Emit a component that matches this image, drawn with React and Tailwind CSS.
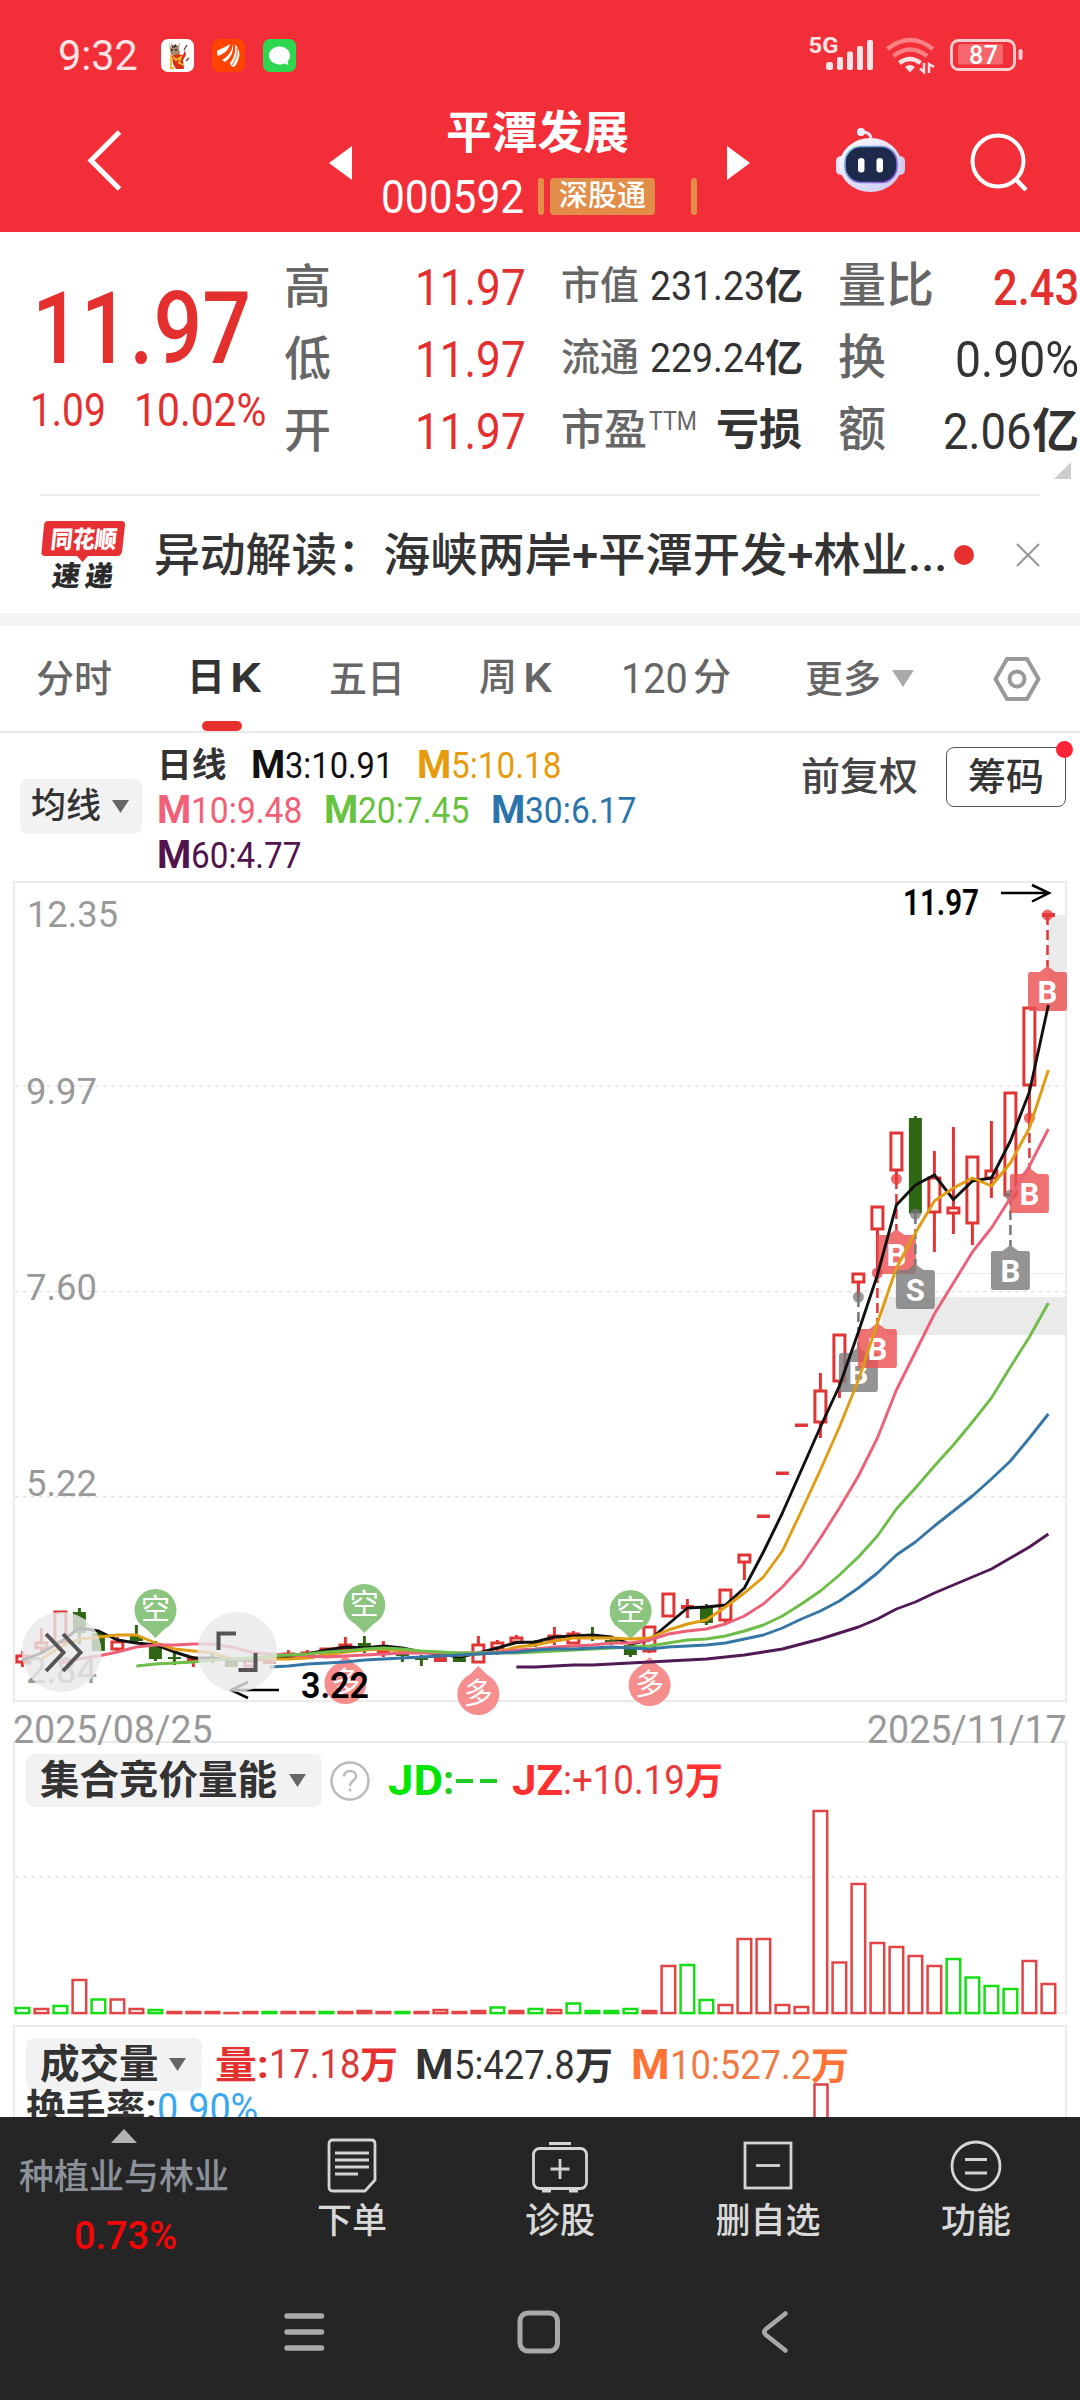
import React, { useLayoutEffect, useRef } from "react";

const RED = "#e03534";
const GREEN = "#2f6613";

// squeezes its text to the width of the box, the way the narrow quote digits look
const Fit = ({ className = "", children }) => {
  const box = useRef(null);
  const inner = useRef(null);

  useLayoutEffect(() => {
    const scale = box.current.clientWidth / inner.current.offsetWidth;
    inner.current.style.transform = `scaleX(${scale})`;
  }, [children]);

  return (
    <span ref={box} className={`block shrink-0 whitespace-nowrap ${className}`}>
      <span ref={inner} className="inline-block origin-left">
        {children}
      </span>
    </span>
  );
};

/* ---------- header ---------- */

const StatusBar = () => (
  <div className="flex h-[110px] items-center pl-[58px] pr-[56px] text-[#fde3e4]">
    <Fit className="w-[80px] text-[43px] leading-none">9:32</Fit>
    <div className="ml-[23px] flex gap-[18px]">
      <svg width="33" height="33" viewBox="0 0 33 33">
        <rect width="33" height="33" rx="7" fill="#fff" />
        <path d="M8 3l2 6 3-3 4 1 2-4-1 6 1 5-4 4-5-2-1-5z" fill="#a98a6c" />
        <path d="M10 4l2 3 3-2 1 3-5 1z" fill="#4a3a2c" />
        <path d="M11 17l6-2 5 1 2-5 1 5-3 5 1 9H15l-3-5z" fill="#d9301c" />
        <path d="M12 18l3 3 5-3-2 6 5 2M10 16v14M9 29h4" stroke="#f3b62a" strokeWidth="1.800" fill="none" />
        <path d="M23 11l3-5M25 22l3-3" stroke="#6b3b2a" strokeWidth="1.300" />
        <path d="M10 11h2M14 11h2" stroke="#222" strokeWidth="1.400" />
      </svg>
      <svg width="33" height="33" viewBox="0 0 33 33">
        <rect width="33" height="33" rx="7" fill="#ff4400" />
        <path d="M5 12C10 9 14 8 18 5C17 10 14 14 6 17C5 16 5 14 5 12z" fill="#fff" />
        <path d="M21 5C20 12 17 17 10 21L13 23C19 19 22 12 21 5z" fill="#fff" />
        <path d="M23 5C27 10 29 15 26 21C25 25 23 28 21 28C19 27 18 25 18 24C22 19 24 13 23 5z" fill="#fff" />
        <path d="M25 9C26 15 24 20 20 26" stroke="#ff4400" strokeWidth="0.900" fill="none" />
      </svg>
      <svg width="33" height="33" viewBox="0 0 33 33">
        <rect width="33" height="33" rx="7" fill="#2fd64f" />
        <path d="M16.500 7.500C22 7.500 27 11 27 16.500C27 19 26 21 24.500 22.500L25.500 26L21.500 24.500C20 25.200 18 25.500 16.500 25.500C11 25.500 6 22 6 16.500C6 11 11 7.500 16.500 7.500z" fill="#fff" />
      </svg>
    </div>
    <div className="ml-auto flex items-center">
      <svg width="215" height="40" viewBox="808 34 215 40">
        <text x="807.500" y="52" fontSize="22" fontWeight="700" textLength="30" lengthAdjust="spacingAndGlyphs" fill="#fde3e4" fontFamily="Roboto, sans-serif">5G</text>
        <g fill="#fde3e4">
          <rect x="825" y="61" width="7" height="8" rx="2.500" />
          <rect x="836" y="56" width="6" height="13" rx="2" />
          <rect x="846" y="50.500" width="6" height="18.500" rx="2" />
          <rect x="856" y="45" width="6" height="24" rx="2" />
          <rect x="866" y="39" width="6" height="30" rx="2" />
        </g>
        <g fill="none" strokeWidth="4.600">
          <path d="M886.500 48Q909 30 932 48" stroke="#f98084" />
          <path d="M892.500 55Q909 42 926 55" stroke="#f98084" />
          <path d="M898.500 62Q909 54 919.500 62" stroke="#fde3e4" />
        </g>
        <path d="M904 66Q909 62 914 66L909 71.500z" fill="#fde3e4" />
        <path d="M919 67.500l4 3.500V62M933 66l-5-3V72" stroke="#fde3e4" strokeWidth="2.400" fill="none" />
        <rect x="950.500" y="39.500" width="63" height="29" rx="7" fill="none" stroke="#fbd0d2" strokeWidth="2.800" />
        <rect x="957" y="43" width="45" height="20.500" rx="2" fill="#f5676c" />
        <rect x="1017.500" y="48" width="4" height="11" rx="2" fill="#fbd0d2" />
        <text x="968" y="63" fontSize="25" fontWeight="500" textLength="29" fill="#fff" fontFamily="Roboto, sans-serif">87</text>
      </svg>
    </div>
  </div>
);

const TitleBar = () => (
  <div className="flex h-[122px] items-start">
    <svg className="ml-[86px] mt-[17px]" width="40" height="66" viewBox="0 0 40 66" fill="none" stroke="#fff" strokeWidth="5">
      <path d="M33.500 5L5 33.500L33.500 62" />
    </svg>
    <svg className="ml-[203px] mt-[36px]" width="23" height="34" viewBox="0 0 23 34" fill="#fff">
      <path d="M23 0V34L0 17z" />
    </svg>
    <div className="ml-[29px] flex w-[317px] flex-col">
      <Fit className="ml-[65px] mt-px w-[183px] text-[45px] font-bold leading-[46px] text-white">平潭发展</Fit>
      <div className="mt-[21px] flex h-[37px] items-center">
        <Fit className="mt-px w-[143px] text-[46px] font-[450] leading-none text-white">000592</Fit>
        <div className="ml-[14px] h-[37px] w-[6px] rounded-sm bg-[#e28e49]" />
        <div className="ml-[6px] flex h-[37px] w-[105px] items-center justify-center rounded-sm bg-[#e28e49] text-[29px] font-medium leading-none text-white">
          深股通
        </div>
        <div className="ml-[36px] h-[37px] w-[6px] rounded-sm bg-[#e28e49]" />
      </div>
    </div>
    <svg className="ml-[29px] mt-[36px]" width="23" height="34" viewBox="0 0 23 34" fill="#fff">
      <path d="M0 0V34L23 17z" />
    </svg>
    <svg className="ml-[85px] mt-[17px]" width="71" height="66" viewBox="835 127 71 66">
      <defs>
        <linearGradient id="shell" x1="0" y1="0" x2="1" y2="1">
          <stop offset="0" stopColor="#ffffff" />
          <stop offset="1" stopColor="#c9c4ee" />
        </linearGradient>
        <linearGradient id="rim" x1="0" y1="0" x2="1" y2="1">
          <stop offset="0" stopColor="#6fc4e0" />
          <stop offset="1" stopColor="#8a4be0" />
        </linearGradient>
      </defs>
      <path d="M871 139C871 134 867 132 862 132" stroke="#e4dff5" strokeWidth="3" fill="none" />
      <circle cx="861" cy="132" r="4" fill="#f3f0fb" />
      <rect x="836" y="156" width="10" height="19" rx="5" fill="#e6e3f8" />
      <rect x="895" y="156" width="10" height="19" rx="5" fill="#cfcaf0" />
      <ellipse cx="870.500" cy="165" rx="31" ry="27" fill="url(#shell)" />
      <rect x="845" y="146.500" width="52" height="36" rx="16" fill="#1e2a4c" stroke="url(#rim)" strokeWidth="1.600" />
      <rect x="858" y="158" width="6.500" height="14.500" rx="3.200" fill="#fff" />
      <rect x="876.500" y="158" width="6.500" height="14.500" rx="3.200" fill="#fff" />
    </svg>
    <svg className="ml-[64px] mt-[22px]" width="60" height="60" viewBox="970 132 60 60" fill="none" stroke="#fff" strokeWidth="4">
      <circle cx="998" cy="161" r="25.500" />
      <path d="M1015.500 179L1026 190" strokeWidth="4.500" />
    </svg>
  </div>
);

/* ---------- quote ---------- */

const BASIC = ["高", "低", "开"];

const Quote = () => (
  <div className="flex h-[262px] pt-[18px] font-[450] leading-none text-[#333]">
    <div className="w-[284px] text-[#e3302f]">
      <Fit className="ml-[32px] mt-[29px] w-[219px] text-[100px] font-medium leading-[100px]">11.97</Fit>
      <div className="mt-[7px] flex pl-[30px] text-[47px]">
        <Fit className="w-[76px]">1.09</Fit>
        <Fit className="ml-[28px] w-[132px]">10.02%</Fit>
      </div>
    </div>
    <div className="w-[277px]">
      {BASIC.map((name) => (
        <div key={name} className="flex h-[72px] items-center">
          <span className="w-[131px] text-[47px] font-medium text-[#666]">{name}</span>
          <Fit className="w-[111px] pt-[4px] text-[50px] text-[#e3302f]">11.97</Fit>
        </div>
      ))}
    </div>
    <div className="w-[277px] text-[40px]">
      <div className="flex h-[72px] items-center">
        <span className="w-[89px] text-[39px] font-medium text-[#666]">市值</span>
        <Fit className="w-[115px] pt-px">231.23</Fit>
        <span className="text-[38px] font-bold">亿</span>
      </div>
      <div className="flex h-[72px] items-center">
        <span className="w-[89px] text-[39px] font-medium text-[#666]">流通</span>
        <Fit className="w-[115px] pt-px">229.24</Fit>
        <span className="text-[38px] font-bold">亿</span>
      </div>
      <div className="flex h-[72px] items-center">
        <span className="text-[43px] font-medium text-[#666]">市盈</span>
        <Fit className="-mt-[18px] ml-[2px] w-[48px] text-[25px] text-[#666]">TTM</Fit>
        <span className="ml-[19px] text-[43px] font-bold">亏损</span>
      </div>
    </div>
    <div className="flex-1 pr-px text-[50px]">
      <div className="flex h-[72px] items-center justify-between">
        <span className="text-[48px] font-medium text-[#666]">量比</span>
        <Fit className="w-[86px] pt-[4px] font-medium text-[#e3302f]">2.43</Fit>
      </div>
      <div className="flex h-[72px] items-center justify-between">
        <span className="text-[48px] font-medium text-[#666]">换</span>
        <Fit className="w-[124px] pt-[4px]">0.90%</Fit>
      </div>
      <div className="flex h-[72px] items-center">
        <span className="text-[48px] font-medium text-[#666]">额</span>
        <Fit className="ml-auto w-[89px] pt-[4px]">2.06</Fit>
        <span className="text-[47px] font-bold">亿</span>
      </div>
      <svg className="-mt-[4px] ml-auto mr-[8px]" width="17" height="17" viewBox="0 0 17 17">
        <path d="M17 0V17H0z" fill="#ccc" />
      </svg>
    </div>
  </div>
);

const News = () => (
  <div className="mx-[40px] flex h-[119px] items-center border-t-2 border-[#eee] text-[46px] font-medium leading-none text-[#333]">
    <svg className="overflow-visible" width="86" height="70" viewBox="40 518 86 70">
      <path d="M48 519H121Q125.500 519 125 523L122 550Q121 554 117 554H88L82.500 560L77 554H45Q41 554 41.500 550L44 523Q44.500 519 48 519z" fill="#e63033" />
      <text x="0" y="0" transform="translate(50 546) skewX(-6)" fontSize="24" fontWeight="900" textLength="66" lengthAdjust="spacingAndGlyphs" fill="#fff" fontFamily="Noto Sans CJK SC, sans-serif">同花顺</text>
      <text x="0" y="0" transform="translate(51 584) skewX(-8)" fontSize="28" fontWeight="900" textLength="61" fill="#2b2b2b" fontFamily="Noto Sans CJK SC, sans-serif">速递</text>
    </svg>
    <Fit className="ml-[28px] w-[229px]">异动解读：</Fit>
    <Fit className="w-[564px]">海峡两岸+平潭开发+林业...</Fit>
    <div className="ml-[7px] h-[20px] w-[20px] rounded-full bg-[#e8302f]" />
    <svg className="ml-auto" width="24" height="24" viewBox="0 0 24 24" stroke="#999" strokeWidth="2.200">
      <path d="M1 1L23 23M23 1L1 23" />
    </svg>
  </div>
);

/* ---------- tabs and legend ---------- */

const Tabs = () => (
  <div className="flex h-[107px] items-center border-b-2 border-[#e8e8e8] text-[38px] font-medium leading-none text-[#666]">
    <span className="ml-[36px] w-[151px]">分时</span>
    <div className="relative flex w-[142px] gap-[5px] font-bold text-[#333]">
      <span>日</span>
      <Fit className="w-[31px] text-[41px] font-semibold">K</Fit>
      <div className="absolute left-[15px] top-[63px] h-[10px] w-[40px] rounded-full bg-[#e8302f]" />
    </div>
    <span className="w-[150px]">五日</span>
    <div className="flex w-[142px] gap-[6px]">
      <span>周</span>
      <Fit className="w-[29px] text-[41px]">K</Fit>
    </div>
    <div className="flex w-[184px] gap-[5px]">
      <Fit className="w-[67px] text-[42px] font-[450]">120</Fit>
      <span>分</span>
    </div>
    <span>更多</span>
    <svg className="ml-[11px]" width="22" height="17" viewBox="0 0 22 17">
      <path d="M0 0H22L11 17z" fill="#aaa" />
    </svg>
    <svg className="ml-auto mr-[39px]" width="48" height="46" viewBox="0 0 48 46" fill="none" stroke="#999" strokeWidth="4">
      <path d="M14 3H34L45.500 23L34 43H14L2.500 23z" strokeLinejoin="round" />
      <circle cx="24" cy="23" r="7.500" />
    </svg>
  </div>
);

const Caret = ({ className }) => (
  <svg className={className} width="17" height="13" viewBox="0 0 17 13">
    <path d="M0 0H17L8.500 13z" fill="#666" />
  </svg>
);

const Ma = ({ value, className, width }) => (
  <div className={`flex items-baseline ${className}`}>
    <Fit className="w-[34px] text-[38px] font-bold">M</Fit>
    <Fit className={width}>{value}</Fit>
  </div>
);

const Legend = () => (
  <div className="flex h-[147px] items-start leading-none">
    <div className="ml-[20px] mt-[46px] flex h-[55px] w-[122px] items-center rounded-lg bg-[#f2f2f2] pl-[11px] text-[35px] font-medium text-[#333]">
      均线
      <Caret className="ml-[11px]" />
    </div>
    <div className="ml-[15px] mt-[9px] w-[560px] text-[36px] font-[450]">
      <div className="flex h-[45px] items-center">
        <Fit className="w-[94px] text-[34px] font-bold text-[#333]">
          <span className="pr-[24px]">日线</span>
        </Fit>
        <Ma value="3:10.91" width="w-[108px]" className="text-[#111]" />
        <Ma value="5:10.18" width="w-[110px]" className="ml-[24px] text-[#e69b0c]" />
      </div>
      <div className="flex h-[45px] items-center gap-[22px]">
        <Ma value="10:9.48" width="w-[111px]" className="text-[#f25f78]" />
        <Ma value="20:7.45" width="w-[111px]" className="text-[#67c23f]" />
        <Ma value="30:6.17" width="w-[111px]" className="text-[#2b74ab]" />
      </div>
      <div className="flex h-[45px] items-center">
        <Ma value="60:4.77" width="w-[110px]" className="text-[#52134f]" />
      </div>
    </div>
    <span className="ml-auto mt-[25px] text-[39px] font-medium text-[#444]">前复权</span>
    <div className="relative ml-[28px] mr-[14px] mt-[14px] flex h-[60px] w-[120px] items-center justify-center rounded-lg border border-[#555] text-[38px] font-medium text-[#333]">
      筹码
      <div className="absolute -right-[8px] -top-[7px] h-[17px] w-[17px] rounded-full bg-[#ff2338]" />
    </div>
  </div>
);

/* ---------- candle chart ---------- */

const xAt = (i) => 22.4 + i * 19;

// [up, body top, body bottom, wick top, wick bottom] in chart pixels
const CANDLES = [
  [1, 1656, 1662, 1651, 1667],
  [1, 1643, 1648, 1628, 1653],
  [1, 1612, 1642, 1612, 1642],
  [0, 1612, 1633, 1608, 1644],
  [0, 1633, 1651, 1630, 1651],
  [1, 1642, 1649, 1637, 1652],
  [0, 1636, 1641, 1625, 1643],
  [0, 1643, 1659, 1641, 1661],
  [0, 1657, 1659, 1652, 1665],
  [1, 1658, 1660, 1656, 1667],
  [0, 1657, 1659, 1652, 1663],
  [0, 1661, 1667, 1661, 1667],
  [1, 1661, 1666, 1661, 1666],
  [1, 1660, 1663, 1658, 1664],
  [1, 1654, 1658, 1650, 1658],
  [1, 1653, 1657, 1650, 1658],
  [1, 1649, 1655, 1649, 1655],
  [1, 1645, 1649, 1637, 1650],
  [0, 1643, 1648, 1636, 1653],
  [1, 1650, 1652, 1641, 1657],
  [0, 1653, 1656, 1650, 1662],
  [0, 1657, 1660, 1655, 1666],
  [1, 1658, 1661, 1656, 1662],
  [0, 1657, 1662, 1656, 1662],
  [1, 1645, 1662, 1636, 1662],
  [1, 1643, 1648, 1640, 1655],
  [1, 1638, 1642, 1635, 1643],
  [0, 1642, 1645, 1640, 1647],
  [1, 1636, 1640, 1627, 1645],
  [1, 1634, 1643, 1631, 1643],
  [0, 1634, 1636, 1627, 1641],
  [0, 1640, 1643, 1638, 1645],
  [0, 1645, 1655, 1643, 1657],
  [1, 1627, 1651, 1627, 1653],
  [1, 1594, 1616, 1594, 1616],
  [1, 1606, 1608, 1599, 1618],
  [0, 1607, 1623, 1604, 1625],
  [1, 1590, 1620, 1590, 1625],
  [1, 1555, 1562, 1555, 1580],
  [1, 1515.5, 1517, 1516, 1517],
  [1, 1472.5, 1474, 1473, 1474],
  [1, 1424.5, 1426, 1425, 1426],
  [1, 1391, 1422, 1373, 1438],
  [1, 1335, 1381, 1335, 1398],
  [1, 1274, 1282, 1274, 1297],
  [1, 1207, 1229, 1207, 1273],
  [1, 1133, 1170, 1133, 1179],
  [0, 1118, 1213.5, 1116, 1213],
  [1, 1178, 1212, 1151, 1252],
  [1, 1208, 1213, 1127, 1234],
  [1, 1157, 1223, 1157, 1245],
  [1, 1171, 1178, 1121, 1198],
  [1, 1093, 1195, 1093, 1195],
  [1, 1008, 1085, 1008, 1118],
  [1, 914, 916, 914, 916],
];

// moving averages: index of the first candle, colour, one y for each candle
const AVERAGES = [
  {
    from: 0,
    color: "#111",
    ys: [1660, 1653, 1642, 1628, 1631, 1640, 1643, 1645, 1652, 1658, 1658, 1660, 1660, 1659, 1657, 1654, 1650, 1647, 1648, 1646, 1648, 1652, 1654, 1657, 1653, 1648, 1642.5, 1642, 1637, 1636, 1635, 1637, 1644, 1640, 1624, 1608, 1607, 1605, 1588, 1552, 1513, 1470, 1427, 1386, 1332, 1275, 1205, 1185, 1175, 1199.5, 1181, 1178, 1141, 1092, 1005],
  },
  {
    from: 1,
    color: "#e09c12",
    ys: [1659, 1647, 1639, 1637, 1635, 1635, 1643, 1649, 1651, 1653, 1659, 1659, 1659, 1659, 1658, 1655, 1652, 1650, 1649, 1651, 1652, 1653, 1655, 1654, 1652, 1647, 1645, 1641, 1638, 1638, 1638, 1639, 1638, 1630, 1624, 1620, 1607, 1593, 1577, 1551, 1511, 1470, 1427, 1380, 1323, 1268, 1233, 1201, 1188, 1178, 1186, 1163, 1128, 1070],
  },
  {
    from: 2,
    color: "#ec6078",
    ys: [1663, 1659, 1656, 1652, 1647, 1645, 1645, 1644, 1644, 1647, 1652, 1654, 1655, 1656, 1657, 1656, 1655, 1654, 1653, 1653, 1653, 1653, 1653, 1652, 1650, 1649, 1647, 1646, 1645, 1643, 1643, 1640, 1634, 1631, 1629, 1624, 1616, 1604, 1587, 1566, 1538, 1508, 1476, 1438, 1390, 1352, 1314, 1283, 1252, 1228, 1198, 1166, 1129],
  },
  {
    from: 6,
    color: "#6dbd48",
    ys: [1666, 1664, 1663, 1662, 1660, 1659, 1658, 1656, 1655, 1654, 1652, 1651, 1649, 1648, 1649, 1651, 1652, 1653, 1653, 1653, 1653, 1652, 1651, 1650, 1649, 1648, 1647, 1646, 1643, 1640, 1639, 1636, 1631, 1625, 1616, 1604, 1591, 1575, 1557, 1536, 1509, 1488, 1466, 1445, 1422, 1398, 1367, 1337, 1303],
  },
  {
    from: 13,
    color: "#3676a6",
    ys: [1667, 1666, 1664, 1663, 1662, 1660, 1659, 1658, 1657, 1656, 1655, 1654, 1653, 1652, 1650, 1649, 1649, 1648, 1647, 1648, 1649, 1647, 1646, 1645, 1643, 1639, 1635, 1628, 1619, 1611, 1601, 1588, 1573, 1555, 1542, 1526, 1511, 1496, 1479, 1461, 1438, 1414],
  },
  {
    from: 26,
    color: "#511a55",
    ys: [1667, 1667, 1666, 1665, 1665, 1664, 1663, 1662, 1661, 1660, 1659, 1657, 1655, 1652, 1649, 1644, 1639, 1633, 1627, 1619, 1609, 1602, 1593, 1585, 1577, 1569, 1558, 1547, 1534],
  },
];

// [centre x, top y, letter, red, dot y]
const TRADES = [
  [858.4, 1353, "B", false, 1297],
  [877.4, 1329, "B", true, 1273],
  [896.4, 1235, "B", true, 1179],
  [915.4, 1270, "S", false, 1214],
  [1010.4, 1251, "B", false, 1195],
  [1029.4, 1174, "B", true, 1118],
  [1047.5, 972, "B", true, 915],
];

const Candle = ({ i, data }) => {
  const [up, top, bottom, high, low] = data;
  const x = xAt(i);
  const color = up ? RED : GREEN;
  return (
    <g stroke={color} strokeWidth="3">
      {high < top && <path d={`M${x} ${high}V${top}`} />}
      {low > bottom && <path d={`M${x} ${bottom}V${low}`} />}
      {up ? (
        bottom - top < 4 ? (
          <rect x={x - 6.5} y={top - 1} width="13" height={bottom - top + 2} fill={color} stroke="none" />
        ) : (
          <rect x={x - 5.5} y={top} width="11" height={bottom - top} fill="#fff" />
        )
      ) : (
        <rect x={x - 6.5} y={top} width="13" height={bottom - top} fill={color} stroke="none" />
      )}
    </g>
  );
};

const Trade = ({ x, y, letter, red, dot }) => (
  <g>
    <path d={`M${x} ${dot}V${y - 5}`} stroke={red ? RED : "#777"} strokeWidth="2.500" strokeDasharray="10 5" />
    <circle cx={x} cy={dot} r="5.500" fill={red ? "#e8383a" : "#777"} opacity="0.75" />
    <path
      d={`M${x - 17} ${y}H${x - 8}L${x} ${y - 6}L${x + 8} ${y}H${x + 17}Q${x + 19.5} ${y} ${x + 19.5} ${y + 3}V${y + 36}Q${x + 19.5} ${y + 39} ${x + 17} ${y + 39}H${x - 17}Q${x - 19.5} ${y + 39} ${x - 19.5} ${y + 36}V${y + 3}Q${x - 19.5} ${y} ${x - 17} ${y}z`}
      fill={red ? "#ec5253" : "#7c7c7c"}
      opacity="0.82"
    />
    <text x={x} y={y + 31} textAnchor="middle" fontSize="31" fontWeight="700" fill="#fff">
      {letter}
    </text>
  </g>
);

const Pin = ({ x, y, down }) => (
  <g>
    <circle cx={x} cy={y} r="21" fill={down ? "#8bc57f" : "#f78e8e"} />
    <path
      d={down ? `M${x - 12} ${y + 16}L${x} ${y + 28}L${x + 12} ${y + 16}z` : `M${x - 12} ${y - 16}L${x} ${y - 28}L${x + 12} ${y - 16}z`}
      fill={down ? "#8bc57f" : "#f78e8e"}
    />
    <text x={x} y={y + 10} textAnchor="middle" fontSize="29" fill="#fff" fontFamily="Noto Sans CJK SC, sans-serif">
      {down ? "空" : "多"}
    </text>
  </g>
);

const CandleChart = () => (
  <svg className="relative block overflow-visible" width="1080" height="822" viewBox="0 880 1080 822" fontFamily="Roboto, sans-serif">
    <rect x="14" y="882" width="1052" height="819" fill="none" stroke="#ebebeb" strokeWidth="2" />
    <path d="M15 1086H1066M15 1291.500H1066M15 1496.500H1066" stroke="#e2e2e2" strokeWidth="1.300" strokeDasharray="4 4" />
    <rect x="1048" y="915" width="19" height="95" fill="#eaeaea" />
    <rect x="882" y="1297" width="185" height="38" fill="#eaeaea" />
    <path d="M935 1273.500H1067" stroke="#ebebeb" />

    <g fontSize="37" fontWeight="450" fill="#999">
      <text x="27" y="927" textLength="91" lengthAdjust="spacingAndGlyphs">12.35</text>
      <text x="26" y="1104" textLength="71" lengthAdjust="spacingAndGlyphs">9.97</text>
      <text x="26" y="1300" textLength="71" lengthAdjust="spacingAndGlyphs">7.60</text>
      <text x="26" y="1496" textLength="71" lengthAdjust="spacingAndGlyphs">5.22</text>
      <text x="26" y="1683" textLength="71" lengthAdjust="spacingAndGlyphs">2.84</text>
    </g>

    {CANDLES.map((c, i) => (
      <Candle key={i} i={i} data={c} />
    ))}

    <Pin x={155.5} y={1610} down />
    <Pin x={364.3} y={1605} down />
    <Pin x={630.6} y={1611} down />
    <Pin x={345.5} y={1683} />
    <Pin x={478.3} y={1694} />
    <Pin x={649.6} y={1685} />

    {TRADES.map(([x, y, letter, red, dot]) => (
      <Trade key={x} x={x} y={y} letter={letter} red={red} dot={dot} />
    ))}

    {AVERAGES.map((line) => (
      <polyline
        key={line.color}
        points={line.ys.map((y, i) => `${xAt(line.from + i)},${y}`).join(" ")}
        fill="none"
        stroke={line.color}
        strokeWidth="2.900"
        strokeLinejoin="round"
      />
    ))}

    <g fontSize="36" fontWeight="600" fill="#000">
      <text x="903" y="915" textLength="76" lengthAdjust="spacingAndGlyphs">11.97</text>
      <text x="301" y="1698" textLength="68" lengthAdjust="spacingAndGlyphs">3.22</text>
    </g>
    <g fill="none" stroke="#000" strokeWidth="2.500">
      <path d="M1001 893H1048M1032 885L1049 893L1032 901.500" />
      <path d="M279 1690H232M248 1682L231 1690L248 1698" />
    </g>

    <circle cx="61.600" cy="1652" r="40" fill="#e8e8e8" opacity="0.8" />
    <circle cx="237.300" cy="1652" r="40" fill="#e8e8e8" opacity="0.8" />
    <g fill="none" stroke="#555" strokeWidth="4">
      <path d="M46 1634L63.500 1652.500L46 1671M63 1634L80.500 1652.500L63 1671" />
      <path d="M218.500 1650V1633.500H236M238.500 1670H255.500V1653" />
    </g>
  </svg>
);

/* ---------- volume panels ---------- */

// [rising, top y]
const AUCTION = [
  [0, 2008], [1, 2009], [0, 2006], [1, 1980], [0, 1999.5], [1, 1999.5], [1, 2009], [0, 2010], [1, 2012], [1, 2012], [1, 2012],
  [1, 2013], [1, 2012], [0, 2012], [1, 2012], [1, 2012], [0, 2012], [1, 2012], [1, 2011], [1, 2012], [0, 2012], [1, 2012],
  [1, 2010], [1, 2012], [1, 2011], [0, 2007.5], [1, 2011], [0, 2009], [1, 2010], [0, 2003.5], [0, 2011], [0, 2011], [0, 2009],
  [1, 2011], [1, 1966], [0, 1965], [0, 2000], [1, 2005], [1, 1939], [1, 1939], [1, 2005], [1, 2007], [1, 1811], [1, 1962.5],
  [1, 1884], [1, 1943], [1, 1947], [1, 1956], [1, 1966], [0, 1959], [0, 1977.5], [0, 1986], [0, 1989], [1, 1961], [1, 1984],
];

const AuctionPanel = () => (
  <div className="relative mx-[14px] h-[284px]">
    <svg className="absolute left-0 top-0 overflow-visible" width="1053" height="275" viewBox="14 1741 1053 275">
      <path d="M14 2013V1742H1066V2013z" fill="none" stroke="#ebebeb" strokeWidth="2" />
      <path d="M15 1877H1066" stroke="#e8e8e8" strokeWidth="2" strokeDasharray="4 4" />
      {AUCTION.map(([up, y], i) => (
        <rect key={i} x={xAt(i) - 6.8} y={y} width="13.600" height={2013 - y + 0.1} fill="#fff" stroke={up ? "#e24545" : "#16dd16"} strokeWidth="2.500" />
      ))}
    </svg>
    <div className="relative flex items-center pl-[12px] pt-[13px] text-[40px] font-[450] leading-none">
      <div className="flex h-[53px] w-[296px] items-center rounded-lg bg-[#f2f2f2] pl-[14px] text-[39.500px] font-bold text-[#333]">
        集合竞价量能
        <Caret className="ml-[12px]" />
      </div>
      <svg className="ml-[8px]" width="40" height="40" viewBox="0 0 40 40" fill="none" stroke="#bbb" strokeWidth="2.500">
        <circle cx="20" cy="20" r="18.500" />
        <path d="M14 15.500C14 8 26 8 26 15.500C26 19.500 20 19.500 20 25M20 27.500V30.500" />
      </svg>
      <Fit className="ml-[18px] w-[55px] text-[43px] font-bold text-[#00e600]">JD</Fit>
      <div className="flex w-[69px] items-center text-[#22cc22]">
        <Fit className="w-[11px] font-bold">:</Fit>
        <div className="ml-[2px] h-[4px] w-[17px] bg-[#22cc22]" />
        <div className="ml-[7px] h-[4px] w-[17px] bg-[#22cc22]" />
      </div>
      <Fit className="w-[51px] text-[43px] font-bold text-[#ff3030]">JZ</Fit>
      <Fit className="w-[122px] text-[#e83a3a]">:+10.19</Fit>
      <span className="text-[38px] font-bold text-[#ff3030]">万</span>
    </div>
  </div>
);

const VolumePanel = () => (
  <div className="relative ml-[13px] mr-[13px] h-[92px] overflow-hidden border-2 border-b-0 border-[#ebebeb]">
    <svg className="absolute left-[798px] top-[56px]" width="18" height="40" viewBox="0 0 18 40">
      <rect x="1.500" y="1.500" width="13" height="60" fill="none" stroke="#d94545" strokeWidth="2.500" />
    </svg>
    <div className="relative flex items-center pl-[11px] pt-[11px] text-[40px] font-[450] leading-none">
      <div className="flex h-[53px] w-[176px] items-center rounded-lg bg-[#f2f2f2] pl-[14px] text-[39.500px] font-bold text-[#333]">
        成交量
        <Caret className="ml-[10px]" />
      </div>
      <Fit className="ml-[13px] w-[54px] text-[38px] font-bold text-[#e3302f]">量:</Fit>
      <Fit className="w-[91px] text-[#d93a3a]">17.18</Fit>
      <span className="text-[38px] font-bold text-[#e8302f]">万</span>
      <div className="ml-[17px] flex items-baseline text-[#333]">
        <Fit className="w-[39px] text-[43px] font-bold">M</Fit>
        <Fit className="w-[121px]">5:427.8</Fit>
        <span className="text-[38px] font-bold">万</span>
      </div>
      <div className="ml-[18px] flex items-baseline text-[#ee7a45]">
        <Fit className="w-[39px] text-[43px] font-bold text-[#ff7236]">M</Fit>
        <Fit className="w-[141px]">10:527.2</Fit>
        <span className="text-[38px] font-bold text-[#ff7236]">万</span>
      </div>
    </div>
    <div className="relative -mt-[5px] flex items-center pl-[11px] text-[40px] font-[450] leading-none">
      <Fit className="w-[131px] text-[38px] font-bold text-[#333]">换手率:</Fit>
      <Fit className="w-[101px] pt-[3px] text-[#3ba8ee]">0.90%</Fit>
    </div>
  </div>
);

/* ---------- bottom bars ---------- */

const ACTIONS = [
  {
    label: "下单",
    icon: (
      <>
        <path d="M9 3H47Q51 3 51 7V43L41 54H9Q5 54 5 50V7Q5 3 9 3z" />
        <path d="M11 16H45M11 23H45M11 30H45M11 37H34" />
      </>
    ),
  },
  {
    label: "诊股",
    icon: (
      <>
        <rect x="1.500" y="11.500" width="53" height="40" rx="6" />
        <path d="M17 6.500H39M28 22V42M18.500 32H37.500M10 54H19M37 54H46" />
      </>
    ),
  },
  {
    label: "删自选",
    icon: (
      <>
        <rect x="5" y="6" width="46" height="45" />
        <path d="M16 28.500H40" />
      </>
    ),
  },
  {
    label: "功能",
    icon: (
      <>
        <circle cx="28" cy="29" r="24" />
        <path d="M17 22.500H39M17 36H39" />
      </>
    ),
  },
];

const ActionBar = () => (
  <div className="flex h-[153px] font-medium leading-none">
    <div className="flex w-[248px] flex-col items-center pt-[12px]">
      <svg width="26" height="14" viewBox="0 0 26 14">
        <path d="M13 0L26 14H0z" fill="#b3b3b3" />
      </svg>
      <span className="mt-[17px] text-[35px] text-[#8b9199]">种植业与林业</span>
      <Fit className="ml-[3px] mt-[22px] w-[103px] text-[39px] text-[#f50505]">0.73%</Fit>
    </div>
    {ACTIONS.map((a) => (
      <div key={a.label} className="flex w-[208px] flex-col items-center pt-[20px]">
        <svg width="56" height="58" viewBox="0 0 56 58" fill="none" stroke="#d4d4d4" strokeWidth="2.800">
          {a.icon}
        </svg>
        <span className="mt-[9px] text-[35px] text-[#d8d8d8]">{a.label}</span>
      </div>
    ))}
  </div>
);

const SystemBar = () => (
  <svg className="block" width="1080" height="130" viewBox="0 2270 1080 130" fill="none" stroke="#a8a8a8" strokeWidth="5.500" strokeLinecap="round">
    <path d="M287 2316H321.500M287 2332H321.500M287 2348H321.500" />
    <rect x="520" y="2313" width="37.500" height="38" rx="8" strokeWidth="5" />
    <path d="M785.500 2313.500L766 2329Q762.500 2332 766 2335L785.500 2350.500" strokeWidth="4.500" />
  </svg>
);

const App = () => {
  return (
    <div className="h-[2400px] w-[1080px] overflow-hidden bg-white font-['Roboto','Noto_Sans_CJK_SC',sans-serif]">
      <header className="h-[232px] bg-[#f22f38]">
        <StatusBar />
        <TitleBar />
      </header>
      <Quote />
      <News />
      <div className="h-[13px] bg-[#f4f4f4]" />
      <Tabs />
      <Legend />
      <CandleChart />
      <div className="relative z-10 flex h-[39px] items-start justify-between px-[13px] pt-[9px] text-[39px] font-[450] leading-none text-[#999]">
        <Fit className="w-[200px]">2025/08/25</Fit>
        <Fit className="w-[200px]">2025/11/17</Fit>
      </div>
      <AuctionPanel />
      <VolumePanel />
      <footer className="h-[283px] bg-[#252525]">
        <ActionBar />
        <SystemBar />
      </footer>
    </div>
  );
};

export default App;
